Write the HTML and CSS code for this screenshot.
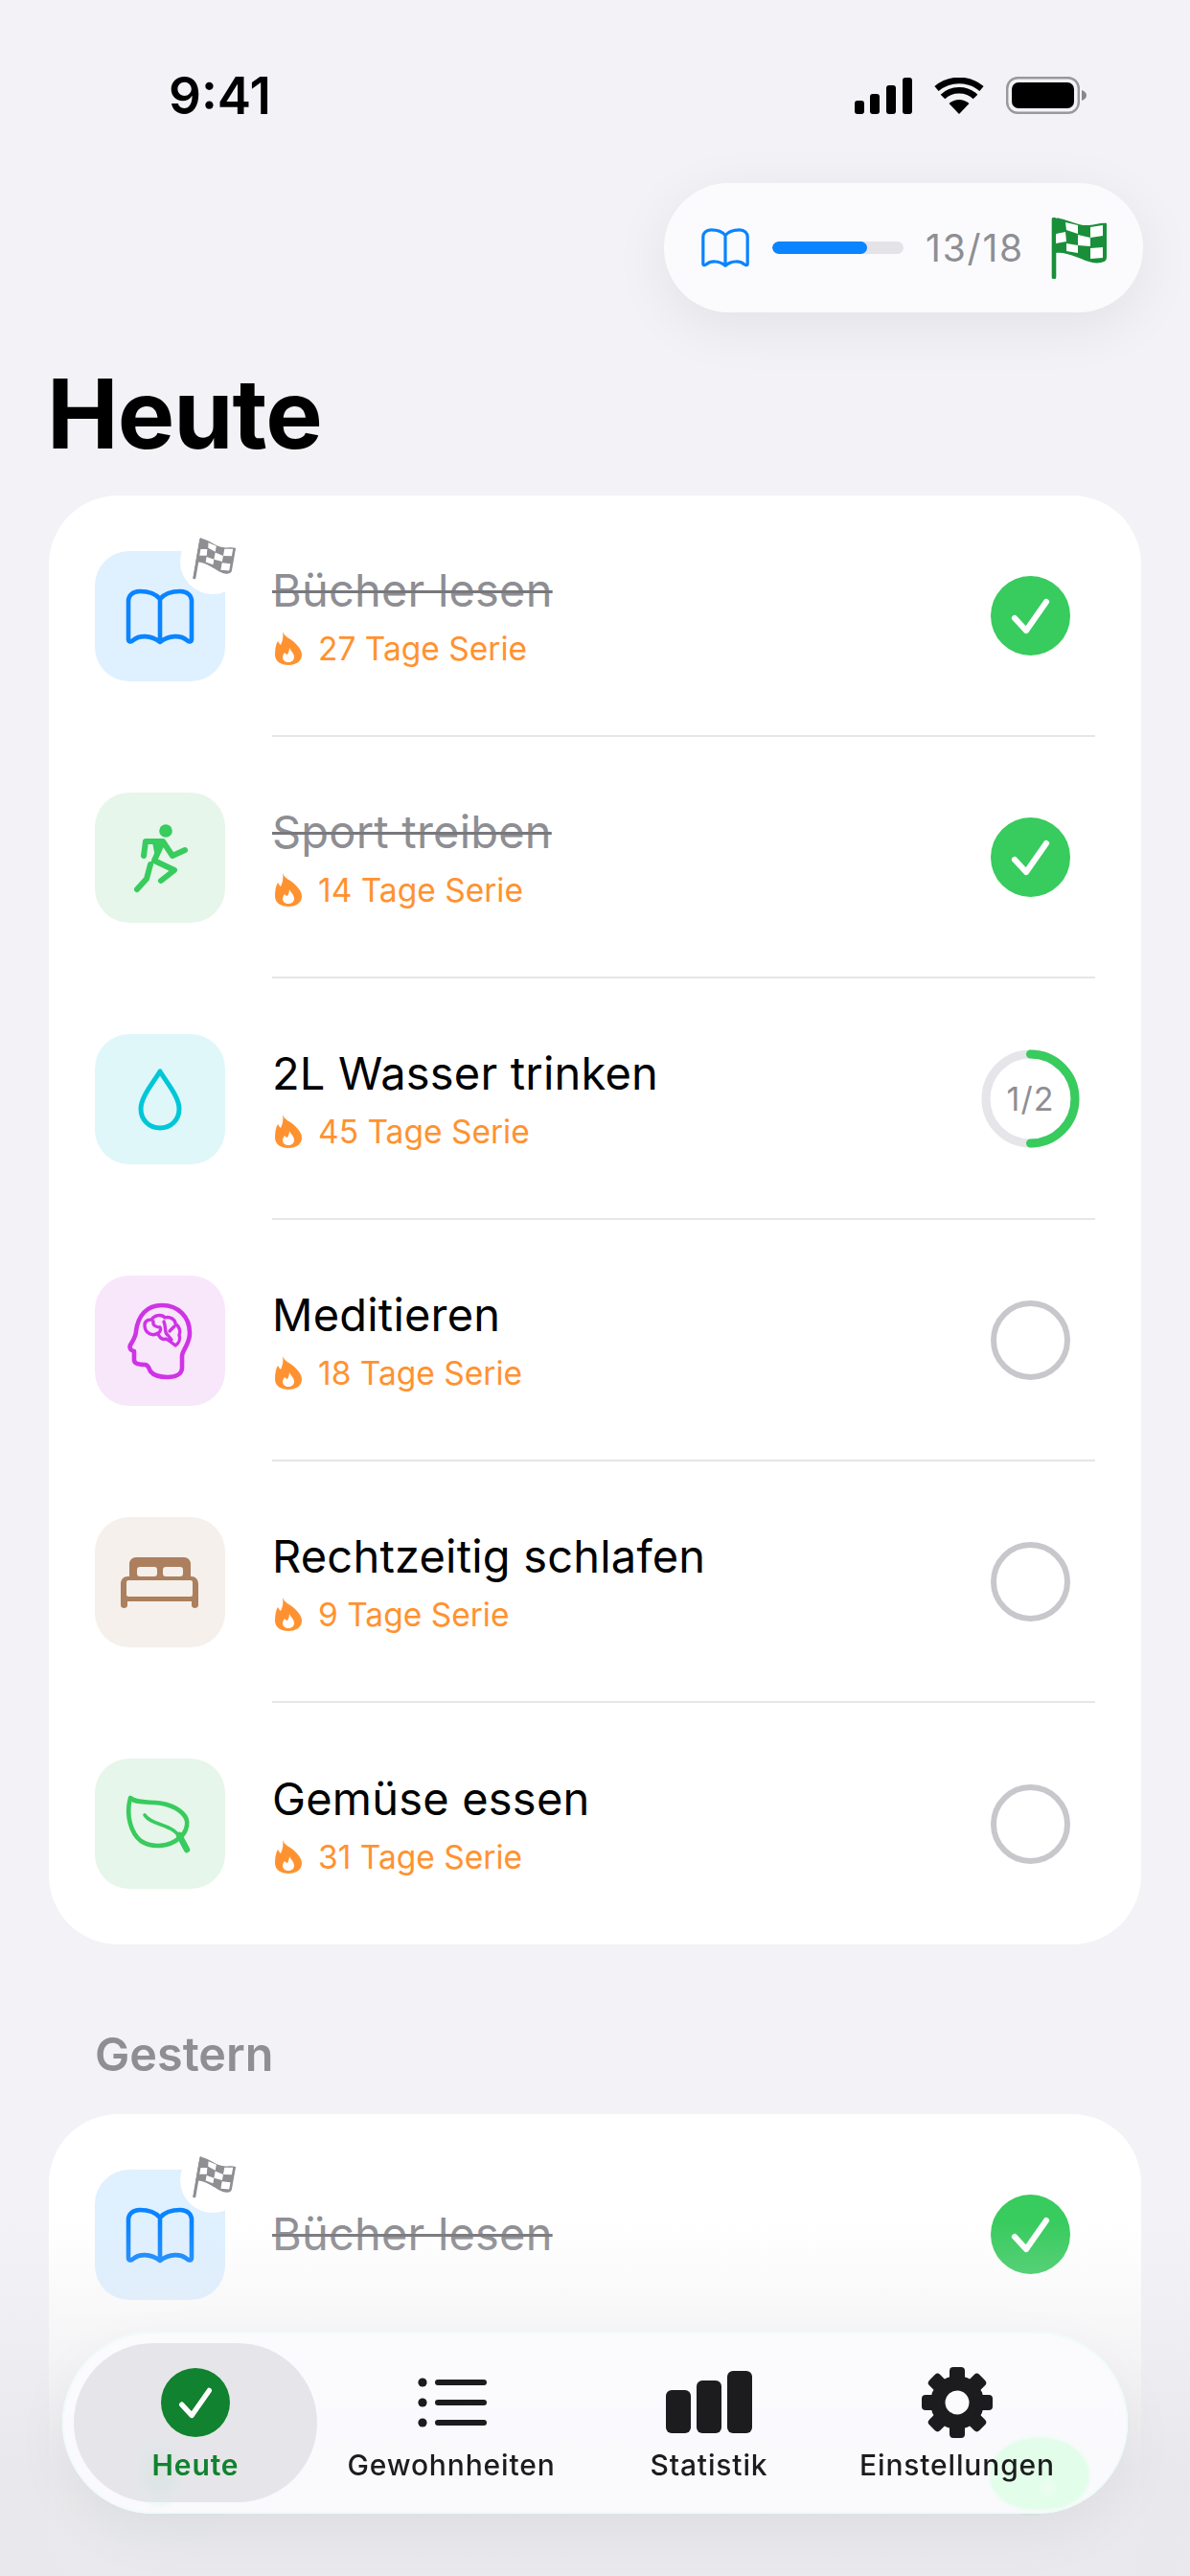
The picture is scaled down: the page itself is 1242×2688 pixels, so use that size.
FILE: index.html
```html
<!DOCTYPE html>
<html lang="de">
<head>
<meta charset="utf-8">
<title>Heute</title>
<link rel="stylesheet" href="styles.css">
</head>
<body>
<svg class="sprite" aria-hidden="true">
  <defs>
    <symbol id="book" viewBox="31 38 74 61">
      <path d="M68 50C63 44 55 42 47 42 39 42 35 47 35 52V92C35 95 38 95 40 93 46 88 58 87 68 95 78 87 90 88 96 93 98 95 101 95 101 92V52C101 47 97 42 89 42 81 42 73 44 68 50ZM68 50V95" fill="none" stroke="currentColor" stroke-width="4.6" stroke-linejoin="round"/>
    </symbol>
    <symbol id="flag" viewBox="0 0 59 64">
      <path d="M3 2V62" stroke="currentColor" stroke-width="4.6" stroke-linecap="round"/>
      <path d="M1 3C3 1 6 0 9 1 20 3 28 9 40 8 46 8 52 5 58 6V41C58 45 56 46 52 47 43 49 35 44 26 41 18 38 11 36 5 37H1Z" fill="currentColor"/>
      <path d="M15 5 28 8V17L16 13ZM41 10 54 8V19L41 21ZM5 17 15 15 16 25 5 27ZM28 18 41 21V30L28 29ZM16 27 28 29V37L16 35ZM41 32 54 31V42L41 43Z" fill="#fff"/>
    </symbol>
    <symbol id="flame" viewBox="0 0 28 35">
      <path d="M8 0C10 6 16 7 21 12 25 16 28 20 28 24 28 31 22 35 14 35 6 35 0 31 0 24 0 18 1 13 3 10 4 12 5 13 6 14 8 10 9 5 8 0Z" fill="currentColor"/>
      <path d="M15 17C16 20 20 22 20 27 20 30 17 32 14 32 11 32 8 30 8 27 8 25 9 23 10 22 11 23 12 24 13 24 14 22 15 20 15 17Z" fill="#fff"/>
    </symbol>
    <symbol id="check" viewBox="0 0 83 83">
      <circle cx="41.5" cy="41.5" r="41.5" fill="currentColor"/>
      <path d="M25 44 37 57 58 27" fill="none" stroke="#fff" stroke-width="6.2" stroke-linecap="round" stroke-linejoin="round"/>
    </symbol>
  </defs>
</svg>

<div class="screen">
  <header class="status">
    <span class="time">9:41</span>
    <div class="status-icons">
      <svg class="signal" viewBox="0 0 60 38"><rect x="0" y="24" width="10" height="14" rx="3"/><rect x="16" y="17" width="10" height="21" rx="3"/><rect x="33" y="8" width="10" height="30" rx="3"/><rect x="50" y="0" width="10" height="38" rx="3"/></svg>
      <svg class="wifi" viewBox="0 0 52 38"><path d="M26 38 15.500 27C22 21.500 30 21.500 36.500 27Z"/><path d="M9 20C18 11 34 11 43 20" fill="none" stroke="#000" stroke-width="6.500"/><path d="M2.500 11.500C16 0 36 0 49.500 11.500" fill="none" stroke="#000" stroke-width="6.500"/></svg>
      <svg class="battery" viewBox="0 0 84 39"><rect x="1.200" y="1.200" width="74.600" height="36.600" rx="11" fill="none" stroke="#999" stroke-width="2.400"/><rect x="6" y="6" width="65" height="27" rx="7"/><path d="M79 14C82 15 84 17 84 19.500 84 22 82 24 79 25Z" fill="#888"/></svg>
    </div>
  </header>

  <div class="progress-row">
    <div class="progress-pill">
      <svg class="pill-book"><use href="#book"/></svg>
      <div class="bar"><div class="bar-fill" style="width:72%"></div></div>
      <span class="count">13/18</span>
      <svg class="pill-flag"><use href="#flag"/></svg>
    </div>
  </div>

  <h1 class="title">Heute</h1>

  <section class="card">
    <div class="row">
      <div class="tile tile-blue">
        <svg class="glyph book-glyph" viewBox="0 0 136 136"><use href="#book" x="31" y="38" width="74" height="61"/></svg>
        <span class="badge"></span>
        <svg class="badge-flag"><use href="#flag"/></svg>
      </div>
      <div class="row-body">
        <div class="texts">
          <div class="name done">Bücher lesen</div>
          <div class="streak"><svg class="flame"><use href="#flame"/></svg>27 Tage Serie</div>
        </div>
        <div class="trail"><svg class="tick"><use href="#check"/></svg></div>
      </div>
    </div>

    <div class="row">
      <div class="tile tile-green">
        <svg class="glyph" viewBox="0 0 136 136">
          <circle cx="74" cy="40" r="6.800" fill="#38cb5e"/>
          <path d="M51 66 53 51H71L81 66 94 60M71 51 62 71 83 81 69 92M58 75 54 90 44 101" fill="none" stroke="#38cb5e" stroke-width="6" stroke-linecap="round" stroke-linejoin="round"/>
          <path d="M60 52H71L64 72Z" fill="#38cb5e"/>
        </svg>
      </div>
      <div class="row-body">
        <div class="texts">
          <div class="name done">Sport treiben</div>
          <div class="streak"><svg class="flame"><use href="#flame"/></svg>14 Tage Serie</div>
        </div>
        <div class="trail"><svg class="tick"><use href="#check"/></svg></div>
      </div>
    </div>

    <div class="row">
      <div class="tile tile-cyan">
        <svg class="glyph" viewBox="0 0 136 136"><path d="M68 39C60 52 48 66 48 78 48 90 57 98 68 98 79 98 88 90 88 78 88 66 76 52 68 39Z" fill="none" stroke="#00c7d8" stroke-width="5" stroke-linejoin="round"/></svg>
      </div>
      <div class="row-body">
        <div class="texts">
          <div class="name">2L Wasser trinken</div>
          <div class="streak"><svg class="flame"><use href="#flame"/></svg>45 Tage Serie</div>
        </div>
        <div class="trail">
          <div class="ring">
            <svg class="ring-svg" viewBox="0 0 103 103"><circle cx="51.500" cy="51.500" r="46.500" fill="none" stroke="#e5e5ea" stroke-width="9"/><path d="M51.500 5A46.500 46.500 0 0 1 51.500 98" fill="none" stroke="#38cb5e" stroke-width="9" stroke-linecap="round"/></svg>
            <span class="ring-text">1/2</span>
          </div>
        </div>
      </div>
    </div>

    <div class="row">
      <div class="tile tile-purple">
        <svg class="glyph" viewBox="0 0 136 136">
          <path d="M91 96V84C91 78 99 72 99 60 99 43 87 31 70 31 54 31 45 42 43 58 43 62 41 66 38 71 35 75 37 78 41 79V88C41 92 45 93 52 93 56 93 56 96 58 100 62 105 70 106 76 106 84 106 91 103 91 96Z" fill="none" stroke="#cf33e6" stroke-width="4.600" stroke-linejoin="round"/>
          <path d="M52 52C52 47 56 46 59 46 62 41 70 40 73 44 78 42 84 46 84 50 88 53 90 58 88 62 90 67 87 71 84 73 80 70 78 68 74 66 70 68 66 63 66 60 60 64 52 60 52 52ZM61 48C60 52 64 54 68 54 70 58 66 60 66 60M72 48C75 55 72 60 76 62L80 67M83 53 78 58" fill="none" stroke="#cf33e6" stroke-width="3.400" stroke-linejoin="round" stroke-linecap="round"/>
        </svg>
      </div>
      <div class="row-body">
        <div class="texts">
          <div class="name">Meditieren</div>
          <div class="streak"><svg class="flame"><use href="#flame"/></svg>18 Tage Serie</div>
        </div>
        <div class="trail"><span class="empty"></span></div>
      </div>
    </div>

    <div class="row">
      <div class="tile tile-brown">
        <svg class="glyph" viewBox="0 0 136 136">
          <path d="M36 62V49C36 45 39 42 43 42H93C97 42 100 45 100 49V62Z" fill="#ac7f5e"/>
          <path d="M27 70C27 65 30 62 34 62H101C105 62 108 65 108 70V92C108 94 106 95 104.500 95 102.500 95 101 94 101 92V88H34V92C34 94 32.500 95 30.500 95 28.500 95 27 94 27 92Z" fill="#ac7f5e"/>
          <rect x="44" y="52" width="21" height="10" rx="3" fill="#f5f0eb"/>
          <rect x="71" y="52" width="21" height="10" rx="3" fill="#f5f0eb"/>
          <rect x="33" y="66" width="69" height="17" rx="2" fill="#f5f0eb"/>
        </svg>
      </div>
      <div class="row-body">
        <div class="texts">
          <div class="name">Rechtzeitig schlafen</div>
          <div class="streak"><svg class="flame"><use href="#flame"/></svg>9 Tage Serie</div>
        </div>
        <div class="trail"><span class="empty"></span></div>
      </div>
    </div>

    <div class="row row-last">
      <div class="tile tile-green">
        <svg class="glyph" viewBox="0 0 136 136">
          <path d="M37 41C44 48 62 44 75 48 88 52 98 60 96 70 95 76 92 80 88 83 78 92 60 94 48 86 38 78 32 60 37 41Z" fill="none" stroke="#38cb5e" stroke-width="4.600" stroke-linejoin="round"/>
          <path d="M52 59C58 68 72 68 82 75L89 81" fill="none" stroke="#38cb5e" stroke-width="3.600" stroke-linecap="round"/>
          <path d="M88 80 96 95" fill="none" stroke="#38cb5e" stroke-width="6.500" stroke-linecap="round"/>
        </svg>
      </div>
      <div class="row-body">
        <div class="texts">
          <div class="name">Gemüse essen</div>
          <div class="streak"><svg class="flame"><use href="#flame"/></svg>31 Tage Serie</div>
        </div>
        <div class="trail"><span class="empty"></span></div>
      </div>
    </div>
  </section>

  <h2 class="section-label">Gestern</h2>

  <section class="card">
    <div class="row">
      <div class="tile tile-blue">
        <svg class="glyph book-glyph" viewBox="0 0 136 136"><use href="#book" x="31" y="38" width="74" height="61"/></svg>
        <span class="badge"></span>
        <svg class="badge-flag"><use href="#flag"/></svg>
      </div>
      <div class="row-body">
        <div class="texts">
          <div class="name done">Bücher lesen</div>
        </div>
        <div class="trail"><svg class="tick"><use href="#check"/></svg></div>
      </div>
    </div>
    <div class="row">
      <div class="tile tile-green"></div>
      <div class="row-body">
        <div class="texts">
          <div class="name done">Sport treiben</div>
        </div>
        <div class="trail"><svg class="tick"><use href="#check"/></svg></div>
      </div>
    </div>
  </section>

  <div class="fade"></div>

  <nav class="tabbar">
    <span class="ghost ghost-left"></span>
    <span class="ghost ghost-right"></span>
    <div class="tab tab-active">
      <svg class="tab-icon tab-check"><use href="#check"/></svg>
      <span class="tab-label">Heute</span>
    </div>
    <div class="tab">
      <svg class="tab-icon" viewBox="-2 0 74 74">
        <circle cx="5" cy="16" r="4.600"/><circle cx="5" cy="37" r="4.600"/><circle cx="5" cy="58" r="4.600"/>
        <rect x="18" y="13" width="54" height="6" rx="3"/><rect x="18" y="34" width="54" height="6" rx="3"/><rect x="18" y="55" width="54" height="6" rx="3"/>
      </svg>
      <span class="tab-label">Gewohnheiten</span>
    </div>
    <div class="tab">
      <svg class="tab-icon tab-wide" viewBox="0 0 90 74">
        <rect x="0" y="24" width="26" height="45" rx="6"/><rect x="32" y="14" width="26" height="55" rx="6"/><rect x="64" y="4" width="26" height="65" rx="6"/>
      </svg>
      <span class="tab-label">Statistik</span>
    </div>
    <div class="tab">
      <svg class="tab-icon" viewBox="0 0 74 74">
        <g transform="translate(37 37)">
          <rect x="-8" y="-37" width="16" height="74" rx="4"/>
          <rect x="-8" y="-37" width="16" height="74" rx="4" transform="rotate(45)"/>
          <rect x="-8" y="-37" width="16" height="74" rx="4" transform="rotate(90)"/>
          <rect x="-8" y="-37" width="16" height="74" rx="4" transform="rotate(135)"/>
          <circle r="28"/>
          <circle r="12.500" fill="#fbfbfe"/>
        </g>
      </svg>
      <span class="tab-label">Einstellungen</span>
    </div>
  </nav>
</div>
</body>
</html>
```
FILE: styles.css
```css
* { box-sizing: border-box; }
html, body { margin: 0; padding: 0; }
body {
  width: 1242px;
  height: 2688px;
  overflow: hidden;
  background: #f2f2f7;
  font-family: Inter, "Liberation Sans", sans-serif;
  color: #000;
}
.sprite { position: absolute; width: 0; height: 0; }
.screen { position: relative; width: 1242px; height: 2688px; overflow: hidden; }

/* status bar */
.status {
  height: 191px;
  padding: 80px 108px 0 176px;
  display: flex;
  justify-content: space-between;
  align-items: flex-start;
}
.time { font-size: 53px; font-weight: 600; line-height: 40px; }
.status-icons { display: flex; align-items: flex-start; gap: 23px; }
.signal { width: 60px; height: 38px; margin-top: 1px; fill: #000; }
.wifi { width: 52px; height: 38px; margin-top: 1px; fill: #000; }
.battery { width: 84px; height: 39px; fill: #000; }

/* progress pill */
.progress-row { display: flex; justify-content: flex-end; padding-right: 49px; }
.progress-pill {
  width: 500px;
  height: 135px;
  border-radius: 68px;
  background: #fbfbfe;
  box-shadow: 0 14px 60px rgba(0, 0, 0, 0.07);
  display: flex;
  align-items: center;
  padding-left: 38px;
}
.pill-book { width: 52px; height: 43px; color: #0a84ff; }
.bar { width: 137px; height: 13px; margin-left: 23px; border-radius: 7px; background: #e3e3e8; overflow: hidden; }
.bar-fill { height: 100%; border-radius: 7px; background: #0a84ff; }
.count { margin-left: 23px; width: 110px; font-size: 39px; line-height: 44px; letter-spacing: 1.8px; color: #8e8e93; }
.pill-flag { width: 59px; height: 64px; margin-left: 21px; color: #1a8f3a; }

/* headings */
.title { margin: 0; height: 191px; padding: 48px 0 0 49px; font-size: 100px; font-weight: 700; line-height: 116px; letter-spacing: -1px; }
.section-label { margin: 87px 0 34px; padding-left: 99px; height: 56px; font-size: 48.5px; font-weight: 600; line-height: 56px; color: #8e8e93; }

/* cards */
.card { margin: 0 51px; border-radius: 72px; background: #fff; }
.row { display: flex; align-items: flex-start; gap: 49px; padding-left: 48px; height: 252px; }
.tile { position: relative; flex: none; width: 136px; height: 136px; margin-top: 58px; border-radius: 36px; }
.tile-blue { background: #dff0ff; }
.tile-green { background: #e6f6ea; }
.tile-cyan { background: #e0f7fa; }
.tile-purple { background: #f8e6fb; }
.tile-brown { background: #f5f0eb; }
.glyph { display: block; width: 136px; height: 136px; }
.book-glyph { color: #0a84ff; }
.badge { position: absolute; left: 89px; top: -23px; width: 68px; height: 68px; border-radius: 50%; background: #fff; }
.badge-flag { position: absolute; left: 105px; top: -11px; width: 40px; height: 44px; color: #8e8e93; transform: rotate(10deg); }

.row-body {
  flex: 1;
  height: 252px;
  margin-right: 48px;
  padding-right: 16px;
  border-bottom: 2px solid #e5e5ea;
  display: flex;
  align-items: center;
  justify-content: space-between;
}
.row-last .row-body { border-bottom: none; }
.name { font-size: 47px; line-height: 56px; letter-spacing: 0.2px; }
.name.done { color: #8e8e93; text-decoration: line-through; text-decoration-color: #77777c; text-decoration-thickness: 3px; }
.streak { display: flex; align-items: center; margin-top: 13px; font-size: 33.5px; line-height: 40px; color: #ff9230; }
.flame { width: 28px; height: 35px; margin: 0 17px 0 3px; color: #ff9230; }

/* trailing state */
.trail { flex: none; width: 103px; height: 103px; display: flex; align-items: center; justify-content: center; }
.tick { width: 83px; height: 83px; color: #38cb5e; }
.empty { width: 83px; height: 83px; border-radius: 50%; border: 6px solid #c7c7cc; }
.ring { position: relative; width: 103px; height: 103px; display: flex; align-items: center; justify-content: center; }
.ring-svg { position: absolute; left: 0; top: 0; width: 103px; height: 103px; }
.ring-text { position: relative; font-size: 34px; letter-spacing: 1px; color: #8e8e93; }

/* bottom fade */
.fade {
  position: absolute;
  left: 0;
  right: 0;
  bottom: 0;
  height: 370px;
  background: linear-gradient(to bottom, rgba(232, 232, 236, 0) 0%, rgba(232, 232, 236, 0.35) 30%, rgba(232, 232, 236, 0.92) 70%, rgba(233, 233, 237, 0.97) 100%);
}

/* tab bar */
.tabbar {
  position: absolute;
  left: 65px;
  top: 2433px;
  width: 1112px;
  height: 190px;
  padding: 12px 0 12px 12px;
  border-radius: 95px;
  overflow: hidden;
  background: rgba(251, 251, 254, 0.94);
  -webkit-backdrop-filter: blur(6px);
  backdrop-filter: blur(6px);
  box-shadow: 0 20px 60px rgba(0, 0, 0, 0.05), inset 0 0 0 2px rgba(240, 252, 248, 0.9);
  display: grid;
  grid-template-columns: 254px 280px 258px 260px;
}
.ghost { position: absolute; border-radius: 50%; }
.ghost-left { left: 72px; top: 110px; width: 60px; height: 76px; background: radial-gradient(closest-side, rgba(175, 238, 195, 0.85), rgba(190, 240, 205, 0)); }
.ghost-right { left: 968px; top: 110px; width: 104px; height: 76px; border-radius: 50% 50% 44% 44%; background: radial-gradient(circle at 58% 70%, #eefdf2 0, #e2fde9 16%); filter: blur(1.5px); }
.tab { position: relative; display: flex; flex-direction: column; align-items: center; padding-top: 25px; border-radius: 83px; }
.tab-active { background: rgba(226, 226, 230, 0.82); color: #11822f; }
.tab-icon { display: block; width: 74px; height: 74px; fill: #1c1c1e; }
.tab-check { width: 72px; height: 72px; margin: 1px; color: #11822f; }
.tab-wide { width: 90px; }
.tab-label { margin-top: 10px; font-size: 30px; font-weight: 500; line-height: 36px; letter-spacing: 0.85px; color: #1c1c1e; }
.tab-active .tab-label { color: #11822f; font-weight: 600; }
```
